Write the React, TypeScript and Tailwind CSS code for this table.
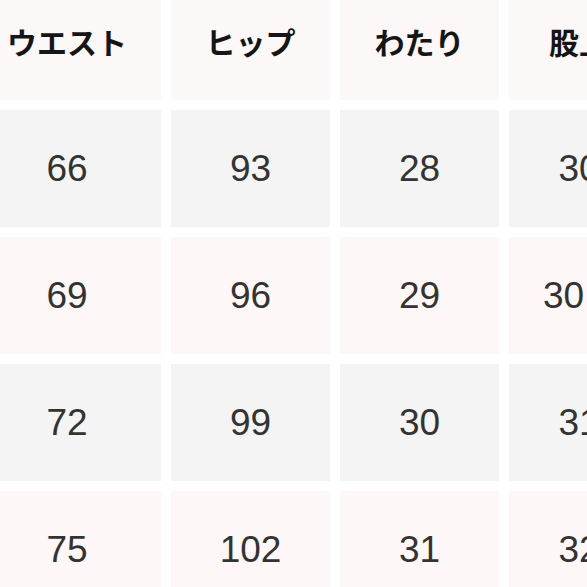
import React from 'react';

const headers = ['ウエスト', 'ヒップ', 'わたり', '股上'];

const rows = [
  ['66', '93', '28', '30'],
  ['69', '96', '29', '30.5'],
  ['72', '99', '30', '31'],
  ['75', '102', '31', '32'],
];

const App: React.FC = () => {
  return (
    <div className="w-[587px] h-[587px] overflow-hidden bg-white">
      <div className="-ml-[27px] -mt-[17px] grid grid-cols-[188px_159px_159px_140px] gap-[10px] w-max">
        {/* Header */}
        {headers.map((h) => (
          <div
            key={h}
            className="h-[117px] bg-[#fcf8f7] flex items-center justify-center text-[30px] font-bold text-[#151515] whitespace-nowrap"
            style={{ fontFamily: '"Noto Sans CJK JP", sans-serif' }}
          >
            {h}
          </div>
        ))}

        {/* Body */}
        {rows.map((row, i) =>
          row.map((v, j) => (
            <div
              key={`${i}-${j}`}
              className={`h-[117px] flex items-center justify-center text-[37px] text-[#333333] whitespace-nowrap ${
                i % 2 === 0 ? 'bg-[#f4f4f4]' : 'bg-[#fdf8f7]'
              }`}
              style={{ fontFamily: '"Liberation Sans", Arial, sans-serif' }}
            >
              {v}
            </div>
          ))
        )}
      </div>
    </div>
  );
};

export default App;
